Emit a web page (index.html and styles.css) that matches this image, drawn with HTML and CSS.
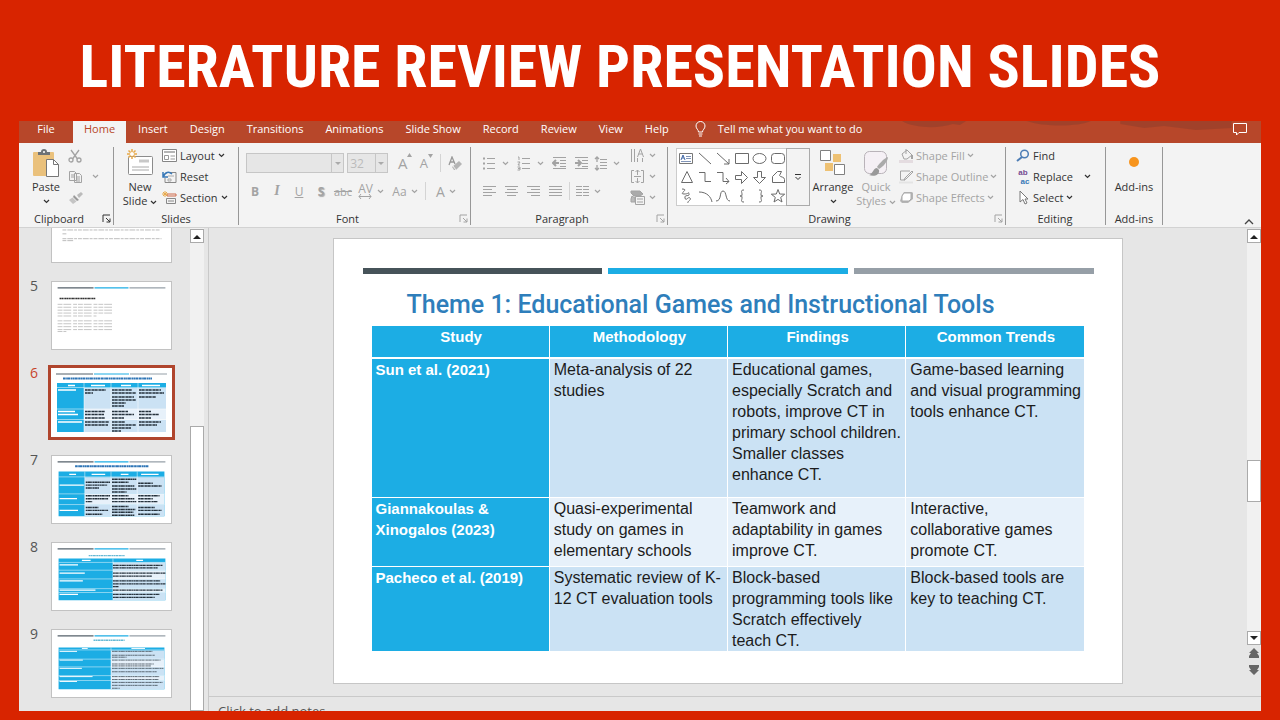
FILE: index.html
```html
<!DOCTYPE html>
<html lang="en">
<head>
<meta charset="utf-8">
<title>Literature Review Presentation Slides</title>
<link rel="stylesheet" href="styles.css">
</head>
<body>
<svg class="defs" aria-hidden="true">
  <symbol id="caret" viewBox="0 0 7 5"><path d="M1 1l2.500 2.500L6 1" fill="none" stroke="currentColor" stroke-width="1.200"/></symbol>
  <symbol id="launch" viewBox="0 0 9 9"><path d="M1 8V1h7M4 4l4 4M8 4.500V8H4.500" fill="none" stroke="currentColor"/></symbol>
  <symbol id="bars" viewBox="0 0 121 69"><path d="M5 6h37" stroke="#55606a" stroke-width="1.200"/><path d="M43 6h35" stroke="#1cade4" stroke-width="1.200"/><path d="M79 6h37" stroke="#969fa7" stroke-width="1.200"/></symbol>
</svg>
<header class="banner"><h1>LITERATURE REVIEW PRESENTATION SLIDES</h1></header>
<main class="app">
  <nav class="tabs">
    <button class="tab file">File</button><button class="tab active">Home</button><button class="tab">Insert</button><button class="tab">Design</button><button class="tab">Transitions</button><button class="tab">Animations</button><button class="tab">Slide Show</button><button class="tab">Record</button><button class="tab">Review</button><button class="tab">View</button><button class="tab">Help</button>
    <button class="tell"><svg width="11" height="16" viewBox="0 0 11 16" fill="none" stroke="#fff"><path d="M3.500 11C3.500 8.500 1 8 1 5a4.500 4.500 0 0 1 9 0c0 3-2.500 3.500-2.500 6zM3.500 13h4M4 15h3"/></svg>Tell me what you want to do</button>
    <svg class="shade" viewBox="0 0 370 22" preserveAspectRatio="none" aria-hidden="true"><path d="M0 0h72l-7 4-8-1c-16 5-45 4-57-3zM140 0h72c-14 6-54 6-72 0zM245 0h125v7l-40 2-36-4-22 2-27-4z" fill="#8d3d2a"/></svg>
    <button class="comment" aria-label="Comments"><svg width="16" height="14" viewBox="0 0 16 14" fill="none" stroke="#fff"><path d="M1.500 1.500h13v9H7l-2.500 2.500v-2.500h-3z"/></svg></button>
  </nav>

  <section class="ribbon" aria-label="Home ribbon">
    <div class="group clip">
      <div class="body">
        <button class="big"><svg width="28" height="30" viewBox="0 0 28 30"><rect x="1" y="4" width="21" height="24" rx="1" fill="#eac17c"/><path d="M6 7V4h3a3 3 0 0 1 6 0h3v3z" fill="#6d7276"/><circle cx="12" cy="4" r="1" fill="#fff"/><path d="M14.500 11.500h7l5 5v12h-12z" fill="#fff" stroke="#777"/><path d="M21.500 11.500v5h5" fill="none" stroke="#777"/></svg><span>Paste</span><svg class="ca"><use href="#caret"/></svg></button>
        <div class="stack dim icons">
          <button aria-label="Cut"><svg width="14" height="14" viewBox="0 0 14 14" fill="none" stroke="currentColor" stroke-width="1.300"><path d="M3 1l6.500 9M11 1L4.500 10"/><circle cx="3" cy="11" r="2"/><circle cx="11" cy="11" r="2"/></svg></button>
          <button aria-label="Copy" class="copy"><svg width="15" height="14" viewBox="0 0 15 14" fill="#f3f3f3" stroke="currentColor"><path d="M1.500 1.500h5l2 2v7h-7zM6.500 3.500h5l2 2v7h-7z"/><path d="M3 5h3M3 7h3M8 7h4M8 9h4M8 11h4"/></svg><svg class="ca"><use href="#caret"/></svg></button>
          <button aria-label="Format painter"><svg width="15" height="14" viewBox="0 0 15 14"><path d="M9 4l4-3 2 2-4 4z" fill="#bbb"/><path d="M6 4l5 5-2 1-4-4z" fill="#999"/><path d="M4.500 6.500l4 4L5 13 1 9z" fill="#c4c4c4"/></svg></button>
        </div>
      </div>
      <div class="foot"><span>Clipboard</span><button aria-label="Clipboard options"><svg width="9" height="9"><use href="#launch"/></svg></button></div>
    </div>

    <div class="group slides">
      <div class="body">
        <button class="big"><svg width="28" height="30" viewBox="0 0 28 30"><rect x="2.500" y="8.500" width="24" height="18" rx="1" fill="#fff" stroke="#8c8c8c"/><path d="M13 13h10" stroke="#c8c8c8" stroke-width="3"/><path d="M6 19h17M6 22h17" stroke="#aaa"/><path d="M6 1v10M1 6h10M2.500 2.500l7 7M9.500 2.500l-7 7" stroke="#e8aa4b" stroke-width="1.500"/><circle cx="6" cy="6" r="2" fill="#fff"/></svg><span>New</span><span>Slide <svg class="ca"><use href="#caret"/></svg></span></button>
        <div class="stack">
          <button><svg width="15" height="13" viewBox="0 0 15 13" fill="none" stroke="#858585"><path d="M.5.500h14v12H.5z" fill="#fff"/><path d="M2 3h11" stroke-width="2" stroke="#b5b5b5"/><path d="M2.500 6.500h4v4h-4zM8.500 7H13M8.500 10H13" stroke="#999"/></svg>Layout <svg class="ca"><use href="#caret"/></svg></button>
          <button><svg width="15" height="14" viewBox="0 0 15 14" fill="none" stroke="#888"><path d="M6 2.500h8v10H3V8"/><path d="M6 6h6M6 9h3v2H6z" stroke="#aaa"/><path d="M1 2v5h5M1.500 6.500C3 2 7 1 10 4" stroke="#3778b7" stroke-width="1.500"/></svg>Reset</button>
          <button><svg width="15" height="14" viewBox="0 0 15 14" fill="none"><path d="M5 3h9v2H5z" stroke="#cf6b4b"/><path d="M4.500 7.500h9v5h-9zM6 10h6" stroke="#888"/><path d="M3 0v6M0 3h6M1 1l4 4M5 1L1 5" stroke="#e8aa4b"/></svg>Section <svg class="ca"><use href="#caret"/></svg></button>
        </div>
      </div>
      <div class="foot"><span>Slides</span></div>
    </div>

    <div class="group font">
      <div class="body rows dim">
        <div class="row top">
          <span class="combo name"><select aria-label="Font" disabled><option></option></select><i></i></span>
          <span class="combo size"><select aria-label="Font size" disabled><option>32</option></select><i></i></span>
          <button class="w22 ga">A<svg width="5" height="4" viewBox="0 0 5 4"><path d="M0 4l2.500-4L5 4" fill="currentColor"/></svg></button>
          <button class="w22 ga small">A<svg width="5" height="4" viewBox="0 0 5 4"><path d="M0 0l2.500 4L5 0" fill="currentColor"/></svg></button>
          <i class="sep"></i>
          <button class="w22" aria-label="Clear formatting"><svg width="15" height="15" viewBox="0 0 15 15"><path d="M2 9L5 1l3 7M3 6h4" fill="none" stroke="#999" stroke-width="1.300"/><path d="M5 11l7-6 3 3-6 6H7z" fill="#b5b5b5"/><path d="M6 10l3 4" stroke="#eee"/></svg></button>
        </div>
        <div class="row letters">
          <button class="w22"><b>B</b></button><button class="w22 serif"><em>I</em></button><button class="w22"><u>U</u></button><button class="w22 sh"><b>S</b></button><button class="w22 abc"><s>abc</s></button>
          <button class="av"><span>AV<svg width="14" height="5" viewBox="0 0 14 5"><path d="M3 0L1 2.500 3 5M11 0l2 2.500L11 5M1 2.500h12" fill="none" stroke="currentColor"/></svg></span><svg class="ca"><use href="#caret"/></svg></button>
          <button class="aa">Aa <svg class="ca"><use href="#caret"/></svg></button>
          <i class="sep"></i>
          <button class="aa color">A <svg class="ca"><use href="#caret"/></svg></button>
        </div>
      </div>
      <div class="foot"><span>Font</span><button class="dim" aria-label="Font options"><svg width="9" height="9"><use href="#launch"/></svg></button></div>
    </div>

    <div class="group para">
      <div class="body dim">
        <div class="rows">
          <div class="row top">
            <button class="w35" aria-label="Bullets"><svg width="14" height="14" viewBox="0 0 14 14" stroke="currentColor"><path d="M5 2.500h8M5 7.500h8M5 12.500h8"/><path d="M1 2.500h2M1 7.500h2M1 12.500h2" stroke-width="2"/></svg><svg class="ca"><use href="#caret"/></svg></button>
            <button class="w35" aria-label="Numbering"><svg width="14" height="15" viewBox="0 0 14 15" fill="none" stroke="currentColor"><path d="M5 2.500h8M5 7.500h8M5 12.500h8M1 1h1v3M.5 6H3L1 9h2M.5 11H3v3H.5M1 12.500h2"/></svg><svg class="ca"><use href="#caret"/></svg></button>
            <button class="w22" aria-label="Decrease indent"><svg width="15" height="14" viewBox="0 0 15 14" fill="none" stroke="currentColor"><path d="M1 1.500h13M8 4.500h6M8 7.500h6M8 10.500h6M1 12.500h13"/><path d="M7 7H1.500M4 4L1 7l3 3" stroke-width="2"/></svg></button>
            <button class="w22" aria-label="Increase indent"><svg width="15" height="14" viewBox="0 0 15 14" fill="none" stroke="currentColor"><path d="M1 1.500h13M8 4.500h6M8 7.500h6M8 10.500h6M1 12.500h13"/><path d="M1 7h5.500M4 4l3 3-3 3" stroke-width="2"/></svg></button>
            <button class="w30" aria-label="Line spacing"><svg width="14" height="15" viewBox="0 0 14 15" fill="none" stroke="currentColor"><path d="M6 3.500h7M6 6.500h7M6 9.500h7M6 12.500h7"/><path d="M3 1v5M1 3l2-2 2 2M3 9v5M1 12l2 2 2-2" stroke-width="1.300"/></svg><svg class="ca"><use href="#caret"/></svg></button>
          </div>
          <div class="row letters aligns">
            <button class="w22" aria-label="Align left"><svg width="13" height="12" viewBox="0 0 13 12" stroke="currentColor"><path d="M0 1.500h13M0 4.500h9M0 7.500h13M0 10.500h9"/></svg></button>
            <button class="w22" aria-label="Center"><svg width="13" height="12" viewBox="0 0 13 12" stroke="currentColor"><path d="M0 1.500h13M2 4.500h9M0 7.500h13M2 10.500h9"/></svg></button>
            <button class="w22" aria-label="Align right"><svg width="13" height="12" viewBox="0 0 13 12" stroke="currentColor"><path d="M0 1.500h13M4 4.500h9M0 7.500h13M4 10.500h9"/></svg></button>
            <button class="w22" aria-label="Justify"><svg width="13" height="12" viewBox="0 0 13 12" stroke="currentColor"><path d="M0 1.500h13M0 4.500h13M0 7.500h13M0 10.500h13"/></svg></button>
            <i class="sep"></i>
            <button class="w30" aria-label="Columns"><svg width="13" height="12" viewBox="0 0 13 12" stroke="currentColor"><path d="M0 1.500h6M7 1.500h6M0 4.500h6M7 4.500h6M0 7.500h6M7 7.500h6M0 10.500h6M7 10.500h6"/></svg><svg class="ca"><use href="#caret"/></svg></button>
          </div>
        </div>
        <div class="stack">
          <button aria-label="Text direction"><svg width="15" height="15" viewBox="0 0 15 15" fill="none" stroke="currentColor"><path d="M1.500 1v13M4.500 1v13M7.500 9l3-8 3 8M8.500 6h4M7.500 10v4M12.500 10v4"/></svg><svg class="ca"><use href="#caret"/></svg></button>
          <button aria-label="Align text"><svg width="15" height="15" viewBox="0 0 15 15" fill="none" stroke="currentColor"><path d="M4 1.500H1.500v12H4M11 1.500h2.500v12H11M4 7.500h7M7.500 1v5M5.500 3l2-2 2 2M7.500 9v5M5.500 12l2 2 2-2"/></svg><svg class="ca"><use href="#caret"/></svg></button>
          <button aria-label="Convert to SmartArt"><svg width="15" height="15" viewBox="0 0 15 15" fill="none" stroke="currentColor"><path d="M1 1h9l3 3-3 2H4L1 3z" fill="#aaa"/><path d="M2 6l3 2v4H1V9z" fill="#bbb"/><path d="M5.500 6.500h9v8h-9z" fill="#f3f3f3"/><path d="M7 9h6M7 12h6"/></svg><svg class="ca"><use href="#caret"/></svg></button>
        </div>
      </div>
      <div class="foot"><span>Paragraph</span><button class="dim" aria-label="Paragraph options"><svg width="9" height="9"><use href="#launch"/></svg></button></div>
    </div>

    <div class="group drawing">
      <div class="body">
        <div class="gallery">
          <svg width="110" height="56" viewBox="0 0 110 56" fill="none" stroke="#6b6b6b"><path d="M2.500 4.500h13v10h-13z" stroke="#777"/><path d="M4 11l2-5 2 5M5 9h2" stroke="#4067a5"/><path d="M9 7.500h5M9 9.500h5M4 12.500h10" stroke="#8094b8"/><path d="M22 4l12 11M40 4l12 11M52 10v5h-5"/><path d="M58.500 4.500h13v10h-13z"/><ellipse cx="82.500" cy="9.500" rx="6.500" ry="5"/><rect x="94.500" y="4.500" width="13" height="10" rx="3"/><path d="M4.500 33.500l5.500-11 5.500 11zM22 23.500h6v9h6M40 23.500h6v9h6M49 29l3 3.500-3 2.500M58.500 26.500h6v-4l6 6-6 6v-4h-6zM80.500 22.500h4v6h4l-6 6-6-6h4zM95.500 33.500v-6l5-5h4l-2 4c1 2 5 1 5 4v3z"/><path d="M5 40c8 0-4 5 2 5s4-3 5 0-5 0-4 4 3-2 5 0-3 3-2 5M22 43c8 0 12 5 13 10M39 52c6 0 3-10 7-10s2 10 7 10M67 41c-4 0-2 2-2 4s0 2-2 2c2 0 2 0 2 2s-2 4 2 4M82 41c4 0 2 2 2 4s0 2 2 2c-2 0-2 0-2 2s2 4-2 4M101 40.500l1.700 4.500 5 .2-4 3.200 1.300 4.600-4-2.600-4 2.600 1.300-4.600-4-3.200 5-.2z"/></svg>
          <button aria-label="More shapes"><svg width="8" height="8" viewBox="0 0 8 8" fill="none" stroke="#333"><path d="M1 1.500h6M1.500 4L4 6.500 6.500 4"/></svg></button>
        </div>
        <button class="big arrange"><svg width="28" height="30" viewBox="0 0 28 30"><path d="M14 6h8v8h-8zM6 15h8v8H6z" fill="#eec173"/><path d="M1.500 2.500h10v10h-10zM15.500 16.500h10v10h-10z" fill="#fff" stroke="#808080"/></svg><span>Arrange</span><svg class="ca"><use href="#caret"/></svg></button>
        <button class="big dim quick"><svg width="28" height="30" viewBox="0 0 28 30"><rect x="2.500" y="3.500" width="22" height="22" rx="5" fill="#f5f0f5" stroke="#b9b3b9"/><path d="M26 9c-4 1-10 8-11 10l2 2c4-2 9-8 9-12z" fill="#aaa"/><path d="M15 20c-4 0-4 6-8 7 5 2 11 0 10-5z" fill="#999"/></svg><span>Quick</span><span>Styles <svg class="ca"><use href="#caret"/></svg></span></button>
        <div class="stack dim">
          <button><svg width="15" height="15" viewBox="0 0 15 15" fill="none" stroke="currentColor"><path d="M3 6l5-4 5 5-5 4H5zM7 6V1"/><path d="M13 7v4" stroke-width="2"/><path d="M0 13.500h14" stroke="#e4dce0" stroke-width="3"/></svg>Shape Fill <svg class="ca"><use href="#caret"/></svg></button>
          <button><svg width="15" height="15" viewBox="0 0 15 15" fill="none" stroke="currentColor"><path d="M11 2H1.500v9H6M6 9l7-7 1 1-7 7-2 1z"/><path d="M0 13.500h14" stroke="#e4e4e4" stroke-width="2"/></svg>Shape Outline <svg class="ca"><use href="#caret"/></svg></button>
          <button><svg width="15" height="15" viewBox="0 0 15 15"><path d="M3 5l2-3h8l1 1v6l-5 4H3L1 11z" fill="#b5b5b5"/><path d="M5 3h7v6l-2 2H3V6z" fill="#fff" stroke="#aaa"/></svg>Shape Effects <svg class="ca"><use href="#caret"/></svg></button>
        </div>
      </div>
      <div class="foot"><span>Drawing</span><button class="dim" aria-label="Drawing options"><svg width="9" height="9"><use href="#launch"/></svg></button></div>
    </div>

    <div class="group editing">
      <div class="body"><div class="stack">
        <button><svg width="14" height="14" viewBox="0 0 14 14" fill="none" stroke="#4d7db5" stroke-width="1.500"><circle cx="8.500" cy="5" r="3.800"/><path d="M6 8l-5 4" stroke-width="2"/></svg>Find</button>
        <button class="replace"><span class="swap"><i>ab</i><i>ac</i></span>Replace<svg class="ca"><use href="#caret"/></svg></button>
        <button><svg width="14" height="15" viewBox="0 0 14 15"><path d="M4 1v11l3-2.500L9 14l2-1-2-4h3z" fill="#fff" stroke="#777"/></svg>Select <svg class="ca"><use href="#caret"/></svg></button>
      </div></div>
      <div class="foot"><span>Editing</span></div>
    </div>

    <div class="group addins">
      <div class="body"><button class="big"><svg width="28" height="30" viewBox="0 0 28 30"><circle cx="14" cy="14" r="5" fill="#f7941d"/></svg><span>Add-ins</span></button></div>
      <div class="foot"><span>Add-ins</span></div>
    </div>
    <button class="collapse" aria-label="Collapse ribbon"><svg width="10" height="7" viewBox="0 0 10 7"><path d="M1 6l4-4 4 4" fill="none" stroke="#444" stroke-width="1.300"/></svg></button>
  </section>

  <section class="work">
    <aside class="panel">
      <div class="thumbs">
        <div class="item"><span></span><button class="thumb" aria-label="Slide 4"><svg viewBox="0 0 121 69"><g stroke="#aaa" stroke-dasharray="4 1 6 1 3 1" stroke-width=".8"><path d="M10 36h100M10 40h5M10 45h102M10 47h12" /></g></svg></button></div>
        <div class="item"><span>5</span><button class="thumb" aria-label="Slide 5"><svg viewBox="0 0 121 69"><use href="#bars"/><path d="M7 17h37" stroke="#333" stroke-width="1.500" stroke-dasharray="1.500 .3 2 .4 1 .3"/><path d="M5 23h58M5 26h58M5 29h58M5 32h58M5 35h40M5 40h58M5 43h58M5 46h58M5 49h58M5 51h9" stroke="#aaa" stroke-dasharray="5 1 8 2 4 1" stroke-width=".7"/></svg></button></div>
        <div class="item on"><span>6</span><button class="thumb" aria-label="Slide 6"><svg viewBox="0 0 121 69"><use href="#bars"/><path d="M12 10.500h89" stroke="#2e75b6" stroke-width="2" stroke-dasharray="2 .3 1.500 .3 3 .5"/><path d="M6 15h109v49H6z" fill="#1cade4"/><path d="M33 20h82v21H33zM33 52h82v12H33z" fill="#cbe2f4"/><path d="M33 41h82v11H33z" fill="#e7f1fa"/><path d="M6 19.500h109M6 41h109M6 51.500h109M33 15v49M60 15v49M87 15v49" stroke="#fff" stroke-width=".5"/><g stroke="#fff" stroke-width="1.300"><path d="M17 17.500h7M40 17.500h14M70 17.500h10M91 17.500h18M7 22h18M7 43.500h17M7 46.500h20M7 54h24"/></g><g stroke="#26323c" stroke-width="1.500" stroke-dasharray="2 .3 3 .3 1 .4"><path d="M34 22h21M34 25h8M61 22h20M61 25h24M61 29h22M61 32h24M61 35h14M61 38h12M88 22h22M88 25h25M88 29h17M34 43.500h20M34 46.500h19M34 50h20M61 43.500h16M61 46.500h22M61 50h12M88 43.500h12M88 46.500h20M88 50h12M34 54h24M34 57h23M61 54h13M61 57h24M61 60h19M61 63h9M88 54h22M88 57h18"/></g></svg></button></div>
        <div class="item"><span>7</span><button class="thumb" aria-label="Slide 7"><svg viewBox="0 0 121 69"><use href="#bars"/><path d="M23 10.500h76" stroke="#2e75b6" stroke-width="2" stroke-dasharray="2 .3 1.500 .3 3 .5"/><path d="M6 16h109v46H6z" fill="#1cade4"/><path d="M33 22h82v17H33zM33 50h82v12H33z" fill="#cbe2f4"/><path d="M33 39h82v11H33z" fill="#e7f1fa"/><path d="M6 21.500h109M6 39h109M6 50h109M33 16v46M60 16v46M87 16v46" stroke="#fff" stroke-width=".5"/><path d="M17 19h7M40 19h14M70 19h8M91 19h18M7 30h25M7 44h18M7 56h19" stroke="#fff" stroke-width="1.300"/><path d="M34 27h25M34 30h22M34 33h14M61 24h25M61 27h17M61 31h23M61 34h25M61 37h15M88 28h15M88 31h24M34 41h25M34 44h23M34 47h7M61 41h17M61 44h23M61 47h25M88 41h22M88 44h15M88 47h20M34 53h13M34 56h23M34 60h17M61 52h17M61 55h24M61 58h22M61 61h23M88 53h17M88 56h24M88 60h22" stroke="#26323c" stroke-width="1.500" stroke-dasharray="2 .3 3 .3 1 .4"/></svg></button></div>
        <div class="item"><span>8</span><button class="thumb" aria-label="Slide 8"><svg viewBox="0 0 121 69"><use href="#bars"/><path d="M37 13h37" stroke="#66b9d5" stroke-width="1.500" stroke-dasharray="2 .4 1.500 .4 3 .5"/><path d="M6 16h110v43H6z" fill="#1cade4"/><path d="M62 20h54v8H62zM62 37h54v10H62zM62 51h54v8H62z" fill="#cbe2f4"/><path d="M62 28h54v9H62zM62 47h54v4H62z" fill="#e7f1fa"/><path d="M6 20h110M6 28h110M6 37h110M6 47h110M6 51h110M62 16v43" stroke="#fff" stroke-width=".5"/><path d="M30 18h9M86 18h7M7 22.500h19M7 31h26M7 39h24M7 48.500h37M7 53h19" stroke="#fff" stroke-width="1.300"/><path d="M62 23h51M62 25.500h46M62 31h54M62 34h40M62 39h49M62 42h54M62 45h6M62 48.500h51M62 53h48M62 56h43" stroke="#26323c" stroke-width="1.300" stroke-dasharray="2 .3 3 .3 1 .4"/></svg></button></div>
        <div class="item"><span>9</span><button class="thumb" aria-label="Slide 9"><svg viewBox="0 0 121 69"><use href="#bars"/><path d="M42 10.500h32" stroke="#66b9d5" stroke-width="1.500" stroke-dasharray="2 .4 1.500 .4 3 .5"/><path d="M6 18h109v43H6z" fill="#1cade4"/><path d="M60 21h55v9H60zM60 38h55v9H60zM60 52h55v9H60z" fill="#cbe2f4"/><path d="M60 30h55v8H60zM60 47h55v5H60z" fill="#e7f1fa"/><path d="M6 20.500h109M6 30h109M6 38h109M6 47h109M6 52h109M60 18v43" stroke="#fff" stroke-width=".5"/><path d="M30 19h6M81 19h14M7 22h18M7 31h24M7 39.500h23M7 48h34M7 53h18" stroke="#fff"/><path d="M61 22h42M61 26h44M61 28h15M61 31h50M61 35h43M61 37h40M61 39.500h53M61 43h46M61 48h49M61 51h48M61 54h52M61 57h47M61 60h8" stroke="#4c5963" stroke-width=".9" stroke-dasharray="2 .3 3 .3 1 .4"/></svg></button></div>
      </div>
      <div class="scroll left"><button class="arrow" aria-label="Scroll up"><svg width="8" height="5" viewBox="0 0 8 5"><path d="M0 5l4-4 4 4z" fill="#222"/></svg></button><div class="track"><i class="knob"></i></div></div>
    </aside>

    <div class="editor">
      <div class="view">
        <div class="canvas">
          <article class="slide">
            <div class="rule"><i></i><i></i><i></i></div>
            <h2>Theme 1: Educational Games and Instructional Tools</h2>
            <table>
              <thead><tr><th>Study</th><th>Methodology</th><th>Findings</th><th>Common Trends</th></tr></thead>
              <tbody>
                <tr class="tall"><th>Sun et al. (2021)</th><td>Meta-analysis of 22 studies</td><td>Educational games, especially Scratch and robots, improve CT in primary school children. Smaller classes enhance CT.</td><td>Game-based learning and visual programming tools enhance CT.</td></tr>
                <tr class="mid"><th>Giannakoulas &amp; Xinogalos (2023)</th><td>Quasi-experimental study on games in elementary schools</td><td>Teamwork and adaptability in games improve CT.</td><td>Interactive, collaborative games promote CT.</td></tr>
                <tr><th>Pacheco et al. (2019)</th><td>Systematic review of K-12 CT evaluation tools</td><td>Block-based programming tools like Scratch effectively teach CT.</td><td>Block-based tools are key to teaching CT.</td></tr>
              </tbody>
            </table>
          </article>
        </div>
        <div class="scroll right"><button class="arrow" aria-label="Scroll up"><svg width="8" height="5" viewBox="0 0 8 5"><path d="M0 5l4-4 4 4z" fill="#222"/></svg></button><div class="track"><i class="knob"></i></div><button class="arrow" aria-label="Scroll down"><svg width="8" height="5" viewBox="0 0 8 5"><path d="M0 0l4 4 4-4z" fill="#222"/></svg></button>
          <button class="page" aria-label="Previous slide"><svg width="10" height="11" viewBox="0 0 10 11"><path d="M5 0l5 5H8l2 3v2H0V8l2-3H0z" fill="#666"/></svg></button><button class="page" aria-label="Next slide"><svg width="10" height="11" viewBox="0 0 10 11"><path d="M5 11l5-5H8l2-3V1H0v2l2 3H0z" fill="#666"/></svg></button></div>
      </div>
      <div class="notes">Click to add notes</div>
    </div>
  </section>
</main>
</body>
</html>
```
FILE: styles.css
```css
* { box-sizing: border-box; }
body { margin: 0; height: 100vh; padding: 0 19px 9px; background: #d82400; display: flex; flex-direction: column; overflow: hidden; font-family: "Open Sans", "Noto Sans", sans-serif; font-size: 11px; color: #333; }
.defs { display: none; }
button { font: inherit; color: inherit; background: none; border: 0; padding: 0; margin: 0; display: flex; align-items: center; justify-content: center; white-space: nowrap; }
svg { display: block; flex: none; }
.ca { width: 7px; height: 5px; display: inline-block; vertical-align: middle; }
.dim { color: #a3a3a3; }

.banner { height: 121px; flex: none; display: flex; align-items: center; justify-content: center; padding: 12px 40px 0 0; }
.banner h1 { margin: 0; font: bold 60px/64px "Roboto Condensed", "Open Sans Condensed", "Liberation Sans Narrow", sans-serif; color: #fff; white-space: nowrap; }

.app { flex: 1; min-height: 0; display: flex; flex-direction: column; background: #e6e6e6; overflow: hidden; }
.tabs { height: 22px; flex: none; display: flex; background: #b7472a; color: #fff; }
.tab { padding: 0 11px 7px; }
.tab.file { width: 54px; }
.tab.active { background: #f3f3f3; color: #b7472a; padding: 0 11px 7px; margin-right: 1px; }
.tell { gap: 12px; margin-left: 15px; padding-bottom: 7px; }
.shade { flex: 1; height: 22px; min-width: 0; margin-left: 40px; opacity: 0.5; }
.comment { margin-right: 13px; padding-bottom: 6px; }

.ribbon { flex: none; height: 85px; display: flex; background: #f3f3f3; padding: 4px 0 2px; border-bottom: 1px solid #d2d2d2; }
.group { border-right: 1px solid #979797; display: flex; flex-direction: column; justify-content: space-between; flex: none; }
.body { height: 62px; display: flex; }
.foot { height: 14px; display: flex; align-items: center; }
.foot span { flex: 1; text-align: center; }
.foot button { width: 14px; }
.big { flex-direction: column; justify-content: flex-start; line-height: 14px; }
.big > svg:first-child { margin: 1px 0 2px; }
.big > .ca { margin-top: 5px; }
.stack { display: grid; grid-template-rows: repeat(3, 21px); margin-top: -2px; }
.stack button { justify-content: flex-start; gap: 3px; }
.clip { width: 95px; }
.clip .body { padding-left: 13px; gap: 8px; }
.clip .big { width: 28px; }
.copy.copy { gap: 9px; }
.slides { width: 125px; }
.slides .body { padding-left: 10px; gap: 6px; }
.slides .big { width: 32px; }
.font { width: 232px; }
.rows { display: flex; flex-direction: column; }
.row { display: flex; align-items: center; }
.row.top { height: 32px; }
.row.letters { height: 24px; }
.w22 { width: 22px; }
.w30 { width: 30px; gap: 5px; }
.w35 { width: 35px; gap: 6px; }
.font .body { padding: 0 5px; }
.combo { display: grid; grid-template-columns: 1fr 12px; height: 20px; border: 1px solid #c6c6c6; background: #e6e6e6; margin: 0 2px; }
.combo select { appearance: none; border: 0; background: none; font: inherit; font-size: 12px; color: #aaa; padding: 0 2px; min-width: 0; }
.combo i { border-left: 1px solid #c6c6c6; display: grid; place-items: center; }
.combo i::after { content: ""; border: 3px solid transparent; border-top-color: #aaa; border-bottom: 0; }
.combo.name { width: 102px; }
.combo.size { width: 42px; margin: 0 7px 0 1px; }
.ga { font-size: 15px; align-items: flex-start; }
.ga.small { font-size: 13px; }
.sep { width: 1px; height: 18px; background: #d4d4d4; margin: 0 3px; }
.letters { font-size: 12px; }
.serif { font-family: "Liberation Serif", serif; font-size: 14px; font-weight: bold; }
.sh { text-shadow: 1px 1px 1px #aaa; }
.abc { font-size: 11px; }
.av { width: 34px; gap: 4px; line-height: 11px; }
.aa { width: 34px; gap: 4px; }
.color { font-size: 14px; }
.para { width: 197px; }
.para .body { padding-left: 7px; }
.para .rows { width: 152px; }
.para .stack button { gap: 4px; }
.drawing { width: 338px; }
.drawing .body { padding-left: 8px; }
.gallery { display: flex; height: 58px; border: 1px solid #ccc; background: #fff; width: 134px; margin-top: 1px; }
.gallery button { flex: 1; border: 1px solid #aaa; background: #f3f3f3; margin: -1px; }
.arrange { width: 46px; }
.quick { width: 40px; margin-right: 3px; }
.drawing .stack button { gap: 2px; }
.editing { width: 100px; }
.editing .body { padding-left: 10px; }
.editing .foot span { padding-right: 1px; }
.swap { display: flex; flex-direction: column; width: 14px; font: bold 8px/9px "Liberation Sans", sans-serif; color: #774b91; }
.swap i { font-style: normal; }
.swap i + i { color: #3778b7; padding-left: 4px; }
.replace .ca { margin-left: 8px; }
.addins { width: 57px; }
.addins .big { flex: 1; }
.collapse { margin: auto 7px 0 auto; }

.work { flex: 1; min-height: 0; display: flex; }
.panel { width: 190px; flex: none; display: flex; border-right: 1px solid #c9c9c9; }
.thumbs { width: 171px; display: flex; flex-direction: column; justify-content: flex-end; gap: 18px; padding: 0 0 13px; overflow: hidden; }
.item { display: flex; flex: none; height: 69px; }
.item span { width: 32px; padding-left: 11px; font-size: 14px; line-height: 9px; color: #555; }
.thumb { width: 121px; border: 1px solid #c2c2c2; background: #fff; }
.thumb svg { width: 100%; height: 100%; }
.item.on span { color: #c8452b; }
.on .thumb { outline: 3px solid #b0452d; border: 0; }
.scroll { display: flex; flex-direction: column; width: 14px; flex: none; background: #f1f1f1; }
.arrow { width: 14px; height: 14px; border: 1px solid #aaa; background: #fff; flex: none; }
.track { flex: 1; display: grid; }
.knob { border: 1px solid #aaa; background: #fff; }
.left .arrow { margin-top: 1px; }
.left .track { grid-template-rows: 39fr 61fr; }
.left .knob { grid-row: 2; }

.editor { flex: 1; min-width: 0; display: flex; flex-direction: column; }
.view { flex: 1; min-height: 0; display: flex; }
.canvas { flex: 1; min-width: 0; display: flex; justify-content: center; align-items: flex-start; padding: 10px 1px 0 0; }
.slide { width: 100%; max-width: 790px; background: #fff; border: 1px solid #c6c6c6; padding: 29px 28px 31px 29px; }
.right { padding-top: 1px; background: #e6e6e6; }
.right .track { background: #f1f1f1; grid-template-rows: 217fr 42fr 129fr; }
.right .knob { grid-row: 2; }
.page { height: 16px; }
.right .page:last-child { margin-bottom: 19px; }
.rule { display: grid; grid-template-columns: repeat(3, 1fr); gap: 6px; }
.rule i { height: 6px; background: #465359; }
.rule i + i { background: #1cade4; }
.rule i + i + i { background: #969fa7; }
.slide h2 { margin: 15px 0 5px 44px; font: 500 25px/32px Roboto, "Liberation Sans", sans-serif; color: #2e7ebb; white-space: nowrap; }
table { width: calc(100% - 18px); margin: 0 9px; table-layout: fixed; border-collapse: separate; border-spacing: 0; font: 16px/21px "Liberation Sans", Arial, sans-serif; color: #1c1c1c; }
th, td { padding: 0 2px 0 4px; vertical-align: top; text-align: left; border-right: 1px solid #fff; border-bottom: 1px solid #fff; background: #cbe2f4; }
th { background: #1cade4; color: #fff; font-size: 15px; }
thead th { text-align: center; height: 33px; border-bottom-width: 2px; }
.tall > * { height: 139px; }
.mid > * { height: 69px; }
.mid td { background: #e7f1fa; }
.notes { height: 15px; flex: none; border-top: 1px solid #c9c9c9; padding: 5px 9px; font-size: 13px; line-height: 18px; color: #555; overflow: hidden; }
```
